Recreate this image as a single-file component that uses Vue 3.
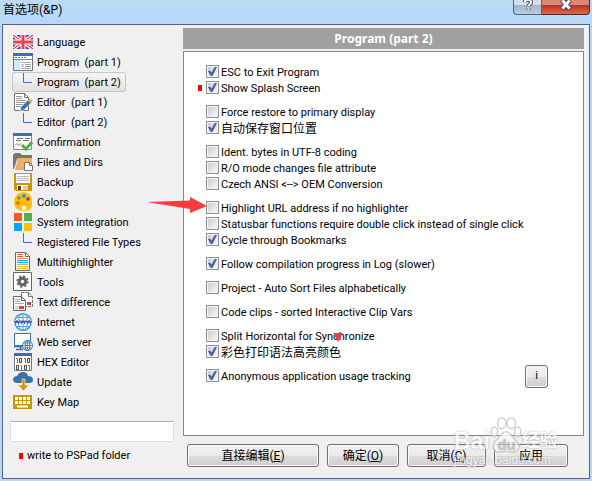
<script setup>
import { ref } from 'vue'

const pages = [
  { icon: 'flag', label: 'Language' },
  { icon: 'window', label: 'Program  (part 1)' },
  { icon: 'child', label: 'Program  (part 2)' },
  { icon: 'editor', label: 'Editor  (part 1)' },
  { icon: 'child', label: 'Editor  (part 2)' },
  { icon: 'confirm', label: 'Confirmation' },
  { icon: 'folder', label: 'Files and Dirs' },
  { icon: 'disk', label: 'Backup' },
  { icon: 'palette', label: 'Colors' },
  { icon: 'tiles', label: 'System integration' },
  { icon: 'child', label: 'Registered File Types' },
  { icon: 'multi', label: 'Multihighlighter' },
  { icon: 'gear', label: 'Tools' },
  { icon: 'diff', label: 'Text difference' },
  { icon: 'globe', label: 'Internet' },
  { icon: 'server', label: 'Web server' },
  { icon: 'hex', label: 'HEX Editor' },
  { icon: 'cloud', label: 'Update' },
  { icon: 'keyboard', label: 'Key Map' },
]
const current = ref(2)
const search = ref('')

const groups = ref([
  [
    { label: 'ESC to Exit Program', on: true },
    { label: 'Show Splash Screen', on: true, marked: true },
  ],
  [
    { label: 'Force restore to primary display', on: false },
    { label: '自动保存窗口位置', on: true, cjk: true },
  ],
  [
    { label: 'Ident. bytes in UTF-8 coding', on: false },
    { label: 'R/O mode changes file attribute', on: false },
    { label: 'Czech ANSI <--> OEM Conversion', on: false },
  ],
  [
    { label: 'Highlight URL address if no highlighter', on: false },
    { label: 'Statusbar functions require double click instead of single click', on: false },
    { label: 'Cycle through Bookmarks', on: true },
  ],
  [{ label: 'Follow compilation progress in Log (slower)', on: true }],
  [{ label: 'Project - Auto Sort Files alphabetically', on: false }],
  [{ label: 'Code clips - sorted Interactive Clip Vars', on: false }],
  [
    { label: 'Split Horizontal for Synchronize', on: false },
    { label: '彩色打印语法高亮颜色', on: true, cjk: true },
  ],
  [{ label: 'Anonymous application usage tracking', on: true, info: true }],
])
</script>

<template>
  <div class="window">
    <header class="titlebar">
      <h1>首选项(&amp;P)</h1>
      <div class="caption">
        <button class="help" aria-label="Help">
          <svg width="12" height="14" viewBox="0 0 12 14">
            <path d="M2.8 4.2Q3 1.8 6 1.8T9 4.2Q9 5.7 7.4 6.6Q6.4 7.2 6.4 8.6M6.4 10.4V12.2" fill="none" stroke="#4a5468" stroke-width="4" />
            <path d="M2.8 4.2Q3 1.8 6 1.8T9 4.2Q9 5.7 7.4 6.6Q6.4 7.2 6.4 8.6M6.4 10.4V12.2" fill="none" stroke="#fff" stroke-width="2" />
          </svg>
        </button>
        <button class="close" aria-label="Close">
          <svg width="14" height="14" viewBox="0 0 14 14">
            <path d="M3 2L11 11M11 2L3 11" stroke="#53445a" stroke-width="5" />
            <path d="M3.4 2.5L10.6 10.5M10.6 2.5L3.4 10.5" stroke="#fff" stroke-width="3" />
          </svg>
        </button>
      </div>
    </header>

    <div class="client">
      <aside>
        <nav>
          <button
            v-for="(p, i) in pages"
            :key="p.label"
            class="page"
            :class="{ selected: i === current }"
            @click="current = i"
          >
            <svg width="20" height="20" viewBox="0 0 20 20" aria-hidden="true">
              <g v-if="p.icon === 'flag'">
                <path d="M0 3H20V17H0Z" fill="#3f56b0" />
                <path d="M0 3L20 17M20 3L0 17" stroke="#fff" stroke-width="3.4" />
                <path d="M0 3L20 17M20 3L0 17" stroke="#e8384a" stroke-width="1.2" />
                <path d="M10 3V17M0 10H20" stroke="#fff" stroke-width="5" />
                <path d="M10 3V17M0 10H20" stroke="#f04050" stroke-width="3" />
                <path d="M0 1H20V3H0ZM0 17H20V19H0Z" fill="#f0f0f0" />
              </g>
              <g v-else-if="p.icon === 'window'">
                <path d="M.5 1.5H19.5V18.5H.5Z" fill="#fff" stroke="#777" />
                <path d="M0 1H20V4H0Z" fill="#3872ad" />
                <path d="M2 5.5H13" stroke="#777" stroke-dasharray="2 1" />
                <path d="M1 7.5H19" stroke="#888" />
                <path d="M1 8H7V18H1Z" fill="#c5edfb" />
                <path d="M8 10.5H18M12 12.5H18M8 16.5H18" stroke="#aaa" />
                <path d="M8 12H11V15H8Z" fill="#ccc" />
                <path d="M12 14.5H18" stroke="#999" />
              </g>
              <path v-else-if="p.icon === 'child'" d="M10.5 1V10.5H19" fill="none" stroke="#3d76ae" />
              <g v-else-if="p.icon === 'editor'">
                <path d="M1.5 1.5H11.5L15.5 5.5V18.5H1.5Z" fill="#fff" stroke="#707070" />
                <path d="M11.5 1.5V5.5H15.5" fill="none" stroke="#707070" />
                <path d="M3 4.5H9M3 6.5H9M3 8.5H13M3 10.5H13M3 12.5H10M3 14.5H8" stroke="#999" />
                <path d="M8 15L15 8L18 11L11 18L7 19Z" fill="#3d76ae" stroke="#f0f0f0" stroke-width=".6" />
                <path d="M15 8L17 6.5L19.5 9L18 11Z" fill="#dfa82e" />
              </g>
              <g v-else-if="p.icon === 'confirm'">
                <path d="M.5 1.5H18.5V17.5H.5Z" fill="#fff" stroke="#888" />
                <path d="M0 1H19V4H0Z" fill="#3872ad" />
                <path d="M4 6.5H10M12 6.5H17M3 8.5H8M10 8.5H16" stroke="#77737f" />
                <path d="M2 13.5L4 11.5L6 13.5L8 11.5" fill="none" stroke="#777" />
                <path d="M9 13L13 17L19 10" fill="none" stroke="#4caf50" stroke-width="3" />
              </g>
              <g v-else-if="p.icon === 'folder'">
                <path d="M0 3L2 1H7L9 3H19V7H4L1 17H0Z" fill="#767676" />
                <path d="M5 6H19V18H2Z" fill="#eab266" />
                <path d="M11.5 10.5H16.5L19.5 13.5V18.5H11.5Z" fill="#fff" stroke="#777" />
                <path d="M16.5 10.5V13.5H19.5" fill="none" stroke="#777" />
              </g>
              <g v-else-if="p.icon === 'disk'">
                <path d="M1 1H19V19H3L1 17Z" fill="#c99700" />
                <path d="M3 2H17V11H3Z" fill="#fff" />
                <path d="M4 4.5H16M4 6.5H16M4 8.5H16" stroke="#bbb" />
                <path d="M4 13H15V18H4Z" fill="#fff" />
                <path d="M5 14H8V18H5Z" fill="#444" />
                <path d="M10 14H15V18H10Z" fill="#ccc" />
              </g>
              <g v-else-if="p.icon === 'palette'">
                <path d="M10 0C16 0 19 4 19 9V14Q18 19 11 19Q2 19 1 11Q1 4 6 1Z" fill="#ffc107" />
                <circle cx="11" cy="4" r="1.9" fill="#2196f3" />
                <circle cx="6" cy="6" r="1.8" fill="#4caf50" />
                <circle cx="15" cy="7" r="1.8" fill="#9c27b0" />
                <circle cx="5" cy="11" r="1.8" fill="#ff5722" />
                <circle cx="11" cy="16" r="2.3" fill="#fff" />
              </g>
              <g v-else-if="p.icon === 'tiles'">
                <path d="M1 1H9V9H1Z" fill="#ff5722" />
                <path d="M11 1H19V9H11Z" fill="#4caf50" />
                <path d="M1 11H9V19H1Z" fill="#03a9f4" />
                <path d="M11 11H19V19H11Z" fill="#ffc107" />
              </g>
              <g v-else-if="p.icon === 'multi'">
                <path d="M2.5 .5H12.5L16.5 4.5V18.5H2.5Z" fill="#fff" stroke="#666" />
                <path d="M12.5 .5V4.5H16.5" fill="none" stroke="#666" />
                <path d="M4 2.5H10M4 4.5H10" stroke="#ff5722" />
                <path d="M4 6.5H15" stroke="#ff8a50" />
                <path d="M4 8.5H15M4 10.5H15" stroke="#03a9f4" />
                <path d="M4 12.5H15" stroke="#aaa" />
                <path d="M4 14.5H15M4 16.5H15" stroke="#f5b600" />
              </g>
              <g v-else-if="p.icon === 'gear'">
                <path d="M.5 .5H18.5V18.5H.5Z" fill="#fff" stroke="#666" />
                <circle cx="9.5" cy="9.5" r="3.3" fill="none" stroke="#666" stroke-width="3" />
                <circle cx="9.5" cy="9.5" r="5.2" fill="none" stroke="#666" stroke-width="2" stroke-dasharray="2.04 2.04" />
              </g>
              <g v-else-if="p.icon === 'diff'">
                <path d="M8.5 .5H15.5L19.5 4.5V14.5H8.5Z" fill="#fff" stroke="#707070" stroke-dasharray="3 1" />
                <path d="M15.5 .5V4.5H19.5" fill="none" stroke="#707070" />
                <path d="M14 10H18V13H14Z" fill="#d04a30" />
                <path d="M.5 4.5H8.5L12.5 8.5V18.5H.5Z" fill="#fff" stroke="#666" />
                <path d="M8.5 4.5V8.5H12.5" fill="none" stroke="#666" />
                <path d="M2 7.5H7M2 9.5H7M2 11.5H11" stroke="#aaa" />
                <path d="M6 14H11V17H6Z" fill="#d04a30" />
                <path d="M2 14.5H5M2 16.5H5" stroke="#bbb" />
              </g>
              <g v-else-if="p.icon === 'globe'" fill="none" stroke="#48a0e8">
                <circle cx="10" cy="10" r="8.3" fill="#fff" stroke-width="1.6" />
                <path d="M10 1V19M3 5.5H17M3 14.5H17" />
                <ellipse cx="10" cy="10" rx="4.5" ry="8.5" />
                <path d="M0 8H20V12H0Z" fill="#f0f0f0" stroke="none" />
                <path d="M1.5 8.5L2.5 11L4 9L5.5 11L6.5 8.5M7.5 8.5L8.5 11L10 9L11.5 11L12.5 8.5M13.5 8.5L14.5 11L16 9L17.5 11L18.5 8.5" stroke="#3f4fae" stroke-width="1.4" />
              </g>
              <g v-else-if="p.icon === 'server'" fill="none">
                <path d="M1.5 1.5H17.5V13.5H1.5Z" fill="#fff" stroke="#3872ad" />
                <path d="M1 14.5H12M7.5 14V17.5M3 17.5H10" stroke="#3872ad" stroke-width="1.6" />
                <circle cx="14.5" cy="13.5" r="5" fill="#fff" stroke="#3872ad" />
                <ellipse cx="14.5" cy="13.5" rx="2.3" ry="5" stroke="#3872ad" />
                <path d="M14.5 8.5V18.5M9.5 13.5H19.5M10.5 11H18.5M10.5 16H18.5" stroke="#3872ad" stroke-width=".8" />
              </g>
              <g v-else-if="p.icon === 'hex'" fill="none">
                <path d="M1.5 1.5H18.5V18.5H1.5Z" fill="#fff" stroke="#777" />
                <path d="M1 1H19V4H1Z" fill="#3872ad" />
                <path d="M3 6.5H4.5V11M11 6.5H12.5V11M7.5 13.5H8.5V18M15 13.5H16.5V18" stroke="#d04a30" />
                <path d="M6.5 6.5H8.5V10.5H6.5ZM14.5 6.5H16.5V10.5H14.5ZM3.5 13.5H5.5V17.5H3.5ZM11.5 13.5H13.5V17.5H11.5Z" stroke="#444" />
              </g>
              <g v-else-if="p.icon === 'cloud'">
                <path d="M3 11Q0 10 0 7Q1 4 4 4Q6 0 10 0Q14 0 15 4Q20 4 20 8Q20 11 16 11Z" fill="#3872ad" />
                <path d="M9 7H12V13H16L10.5 19L5 13H9Z" fill="#d29b00" stroke="#f0f0f0" stroke-width=".6" />
              </g>
              <g v-else>
                <path d="M0 3H19V17H0Z" fill="#c99700" />
                <path d="M2 6.5H17M2 10.5H17" stroke="#fff" stroke-width="3" stroke-dasharray="3 1" />
                <path d="M4 14.5H15" stroke="#fff" stroke-width="2" />
              </g>
            </svg>
            <span>{{ p.label }}</span>
          </button>
        </nav>
        <input v-model="search" class="search" type="text" aria-label="Search" />
        <p class="note">write to PSPad folder</p>
      </aside>

      <main>
        <h2>Program  (part 2)</h2>
        <section class="panel">
          <div v-for="(g, n) in groups" :key="n" class="group">
            <div v-for="o in g" :key="o.label" class="option">
              <label :class="{ cjk: o.cjk, marked: o.marked }">
                <input v-model="o.on" type="checkbox" />
                <span>{{ o.label }}</span>
              </label>
              <button v-if="o.info" class="push info">i</button>
            </div>
          </div>
          <svg class="arrow" width="60" height="18" viewBox="0 0 60 18" aria-hidden="true">
            <path d="M0 6L43 4.5V1L60 10L43 17V13Z" fill="#fb3b3b" />
          </svg>
          <svg class="pointer" width="10" height="10" viewBox="0 0 10 10" aria-hidden="true">
            <path d="M0 1H10L5 10Z" fill="#fb3b3b" />
          </svg>
        </section>
        <footer>
          <button class="push edit">直接编辑(<u>E</u>)</button>
          <button class="push ok">确定(<u>O</u>)</button>
          <button class="push cancel">取消(<u>C</u>)</button>
          <button class="push apply">应用</button>
          <div class="watermark" aria-hidden="true">
            <div class="brand">
              <span>Bai</span>
              <svg width="32" height="36" viewBox="0 0 30 34">
                <g fill="#fff" stroke="#c4c4c4" stroke-width="1.5">
                  <ellipse cx="4" cy="14" rx="3" ry="4.5" />
                  <ellipse cx="11" cy="6" rx="4" ry="5" />
                  <ellipse cx="20" cy="6" rx="4" ry="5" />
                  <ellipse cx="26" cy="14" rx="3" ry="4.5" />
                  <path d="M15 14C20 14 21 20 25 23C30 28 26 34 20 33Q15 32 10 33C4 34 0 28 5 23C9 20 10 14 15 14Z" />
                </g>
                <text x="7" y="31" class="du">du</text>
              </svg>
              <span class="cn">经验</span>
            </div>
            <div class="site">jingyan.baidu.com</div>
          </div>
        </footer>
      </main>
    </div>
  </div>
</template>

<style>
body {
  margin: 0;
}
</style>

<style scoped>
* {
  box-sizing: border-box;
}
.window {
  display: flex;
  flex-direction: column;
  min-height: 100vh;
  padding: 0 2px 2px;
  background: linear-gradient(#bcdcf0, #b5d8fc 24px, #b5d8fc);
  color: #000;
  font: 11px/16px Roboto, "Noto Sans CJK SC", sans-serif;
}
button,
input {
  margin: 0;
  font: inherit;
  color: inherit;
}
.titlebar {
  display: flex;
  justify-content: space-between;
  height: 24px;
}
h1 {
  margin: 0;
  padding: 2px 1px 0;
  font-size: 12px;
  font-weight: 400;
  line-height: 16px;
}
.caption {
  display: flex;
  height: 15px;
}
.caption button {
  display: flex;
  align-items: center;
  justify-content: center;
  padding: 0 0 4px;
  border: 1px solid #56637a;
  border-top: 0;
}
.help {
  width: 29px;
  border-radius: 0 0 0 4px;
  background: linear-gradient(#d3dfec 5px, #9fb3ca 5px, #b9cde2);
}
.caption .close {
  width: 48px;
  border-color: #5a2230;
  border-left: 0;
  border-radius: 0 0 4px 0;
  background: linear-gradient(#d98978 5px, #b8321c 5px, #d96a4a);
}
.client {
  display: flex;
  flex: 1;
  gap: 9px;
  padding: 3px 5px 0 7px;
  border: 1px solid #56637a;
  background: #f0f0f0;
}
aside {
  display: flex;
  flex-direction: column;
  width: 164px;
}
nav {
  display: flex;
  flex-direction: column;
  align-items: flex-start;
  padding: 4px 2px 0;
}
.page {
  display: flex;
  align-items: center;
  gap: 4px;
  height: 20px;
  padding: 0 4px 0 0;
  border: 1px solid transparent;
  border-radius: 3px;
  background: none;
  white-space: pre;
}
.page svg {
  flex: none;
}
.page span {
  padding-top: 2px;
}
.selected {
  border-color: #c6c6c6;
  background: linear-gradient(#f6f6f6, #e2e2e2);
}
.search {
  width: 100%;
  height: 21px;
  margin-top: 9px;
  border: 1px solid #dcdfe6;
  border-top-color: #abadb3;
  border-radius: 1px;
  background: #fff;
}
.note {
  display: flex;
  align-items: center;
  gap: 4px;
  margin: 6px 0 0 9px;
}
.note::before,
.marked::before {
  content: "";
  width: 4px;
  height: 6px;
  background: #f00;
}
main {
  display: flex;
  flex: 1;
  flex-direction: column;
  min-width: 0;
}
h2 {
  margin: 0;
  background: #a0a0a0;
  color: #fff;
  font: bold 12px/21px "Noto Sans", sans-serif;
  text-align: center;
  white-space: pre;
}
.panel {
  position: relative;
  display: flex;
  flex: 1;
  flex-direction: column;
  gap: 8px;
  margin-top: 2px;
  padding: 12px 22px;
  border: 1px solid #82858c;
  background: #fff;
}
.option {
  display: flex;
  align-items: flex-start;
  justify-content: space-between;
  height: 16px;
}
label {
  position: relative;
  display: flex;
  align-items: flex-start;
  gap: 2px;
  white-space: nowrap;
}
label span {
  padding-top: 1px;
}
.cjk {
  font-size: 12px;
}
.marked::before {
  position: absolute;
  left: -8px;
  top: 5px;
}
input[type="checkbox"] {
  flex: none;
  width: 13px;
  height: 13px;
  margin-top: 1px;
  appearance: none;
  border: 1px solid #8e8f8f;
  background: linear-gradient(135deg, #cbcfd5, #f6f6f6) content-box, #f4f4f4;
  padding: 1px;
}
input[type="checkbox"]:checked {
  display: grid;
  place-items: center;
}
input[type="checkbox"]:checked::after {
  content: "";
  width: 9px;
  height: 9px;
  background: #4b5e9e;
  clip-path: polygon(0 45%, 22% 38%, 40% 62%, 75% 0, 100% 0, 50% 100%, 30% 100%);
}
.push {
  flex: none;
  padding: 0;
  border: 1px solid #707070;
  border-radius: 3px;
  background: linear-gradient(#f2f2f2, #ebebeb 50%, #ddd 50%, #cfcfcf);
  box-shadow: inset 0 0 0 1px #fafafa;
}
.info {
  align-self: center;
  width: 23px;
  height: 23px;
  margin-right: 13px;
}
.arrow {
  position: absolute;
  left: -37px;
  top: 144px;
}
.pointer {
  position: absolute;
  left: 149px;
  top: 280px;
}
footer {
  position: relative;
  display: flex;
  gap: 8px;
  padding: 8px 4px 11px;
}
footer .push {
  height: 23px;
  font-size: 12px;
}
.edit {
  width: 132px;
}
.ok {
  width: 72px;
}
.cancel {
  width: 79px;
}
.apply {
  width: 74px;
}
.watermark {
  position: absolute;
  right: 8px;
  bottom: 11px;
  width: 122px;
  color: #fff;
  opacity: 0.75;
  pointer-events: none;
  text-shadow: 0 0 2px #888;
}
.brand {
  display: flex;
  align-items: flex-end;
  font: bold 23px/24px "Liberation Sans", "Noto Sans CJK SC", sans-serif;
}
.cn {
  font-size: 18px;
}
.du {
  fill: #bbb;
  font: bold 14px "Liberation Sans", sans-serif;
}
.site {
  font: 12px/14px "Liberation Sans", sans-serif;
}
</style>
